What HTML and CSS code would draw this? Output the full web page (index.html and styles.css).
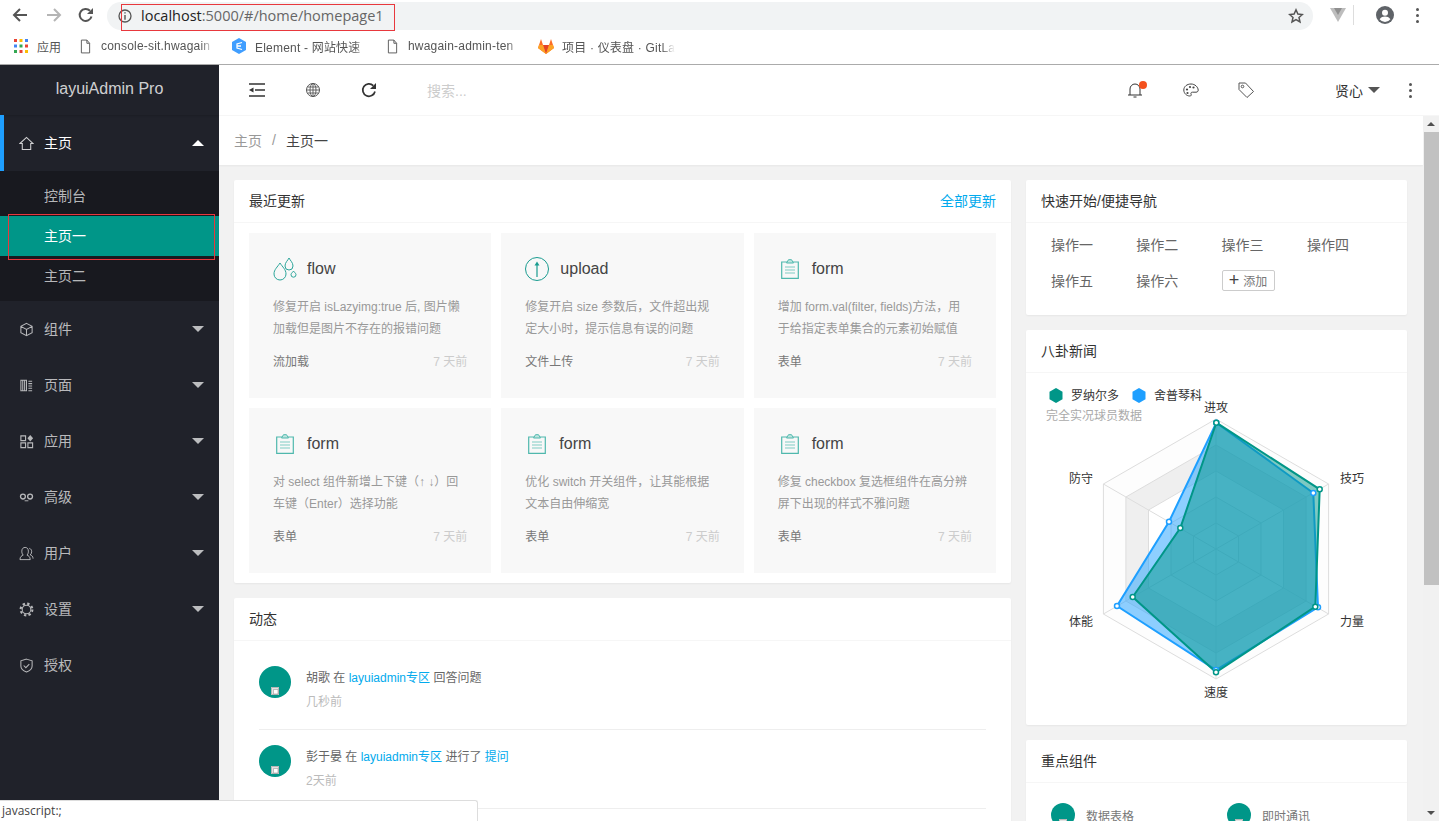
FILE: index.html
```html
<!DOCTYPE html>
<html lang="en">
<head>
  <meta charset="UTF-8" />
  <title>layuiAdmin Pro</title>
  <link rel="stylesheet" href="styles.css">
</head>
<body>

<svg class="defs" width="0" height="0">
  <symbol id="i-form" viewBox="0 0 18 20">
    <path d="M6 3H.7v16.300h16.600V3H12" fill="none" stroke="#4fb8ad" stroke-width="1.200"/>
    <path d="M5.500 4 7.500.7h3L12.500 4z" fill="#bfe5e0" stroke="#4fb8ad" stroke-width="1"/>
    <path d="M4 8h10M4 11h10M4 14h10" stroke="#7fccc3" stroke-width="1"/>
  </symbol>
  <symbol id="i-caret" viewBox="0 0 12 6"><path d="M0 0h12L6 6z" fill="currentColor"/></symbol>
  <symbol id="i-doc" viewBox="0 0 12 16"><path d="M1.500 1h6l3 3.500V15h-9zM7.500 1v3.500h3" fill="#fff" stroke="#555" stroke-width="1"/></symbol>
  <symbol id="i-broken" viewBox="0 0 8 8"><path d="M0 0h8v8H0z" fill="#e4e4e4"/><path d="M.5.5h7v7h-7z" fill="none" stroke="#aaa" stroke-width=".8"/><path d="M2.500 2.500H7V7H2.500z" fill="#fff" stroke="#999" stroke-width=".6"/></symbol>
</svg>

<div class="browser">
  <div class="toolbar">
    <svg class="nav-ico" viewBox="0 0 16 16"><path d="M15 8H2M8 2 2 8l6 6" fill="none" stroke="#555" stroke-width="2"/></svg>
    <svg class="nav-ico" viewBox="0 0 16 16"><path d="M1 8h13M8 2l6 6-6 6" fill="none" stroke="#b5b5b5" stroke-width="2"/></svg>
    <svg class="nav-ico" viewBox="0 0 16 16"><path d="M13.500 9.500A6 6 0 1 1 12 3.700" fill="none" stroke="#555" stroke-width="2"/><path d="M15 1v6H9z" fill="#555"/></svg>
    <div class="omnibox">
      <svg class="info-ico" viewBox="0 0 14 14"><circle cx="7" cy="7" r="6" fill="none" stroke="#555" stroke-width="1.300"/><path d="M6.300 3.200h1.400v1.400H6.300zM6.300 6h1.400v4.800H6.300z" fill="#555"/></svg>
      <span class="url"><b>localhost</b>:5000/#/home/homepage1</span>
      <svg class="star-ico" viewBox="0 0 16 16"><path d="m8 1.800 1.900 4.200 4.500.5-3.400 3 1 4.500L8 11.700 4 14l1-4.500-3.400-3 4.500-.5z" fill="none" stroke="#555" stroke-width="1.500"/></svg>
    </div>
    <svg class="vue-ico" viewBox="0 0 16 14"><path d="M0 0h16L8 14z" fill="#bdbdbd"/><path d="M4 0h8L8 7z" fill="#8f8f8f"/></svg>
    <span class="tool-sep"></span>
    <svg class="acct-ico" viewBox="0 0 18 18"><circle cx="9" cy="9" r="9" fill="#5f6368"/><circle cx="9" cy="6.800" r="3" fill="#fff"/><path d="M3.600 13.200c1.200-2 3.400-2.700 5.400-2.700s4.200.7 5.400 2.700A7 7 0 0 1 9 16a7 7 0 0 1-5.400-2.800z" fill="#fff"/></svg>
    <span class="kebab kebab-browser"><i></i><i></i><i></i></span>
  </div>
  <div class="bookmarks">
    <svg class="apps-ico" viewBox="0 0 14 14">
      <path d="M0 0h3v3H0z" fill="#ea4335"/><path d="M5.500 0h3v3h-3z" fill="#fbbc05"/><path d="M11 0h3v3h-3z" fill="#4285f4"/>
      <path d="M0 5.500h3v3H0z" fill="#4285f4"/><path d="M5.500 5.500h3v3h-3z" fill="#34a853"/><path d="M11 5.500h3v3h-3z" fill="#ea4335"/>
      <path d="M0 11h3v3H0z" fill="#34a853"/><path d="M5.500 11h3v3h-3z" fill="#ea4335"/><path d="M11 11h3v3h-3z" fill="#fbbc05"/>
    </svg>
    <span class="bm-apps">应用</span>
    <svg class="bm-ico bm-doc"><use href="#i-doc"/></svg>
    <span class="bm-text">console-sit.hwagain</span>
    <svg class="bm-ico bm-hex" viewBox="0 0 14 16"><path d="M7 0l7 4v8l-7 4-7-4V4z" fill="#409eff"/><path d="M10 4.500 5 6v4l5 1.500M5 8h4" fill="none" stroke="#fff" stroke-width="1.300"/></svg>
    <span class="bm-text">Element - 网站快速</span>
    <svg class="bm-ico bm-doc"><use href="#i-doc"/></svg>
    <span class="bm-text">hwagain-admin-ten</span>
    <svg class="bm-ico bm-fox" viewBox="0 0 16 15"><path d="M8 15 0 9l1-3 2-6 2 6h6l2-6 2 6 1 3z" fill="#fc6d26"/><path d="M8 15 5 6h6z" fill="#e24329"/><path d="M8 15 0 9l1-3h4zM8 15l8-6-1-3h-4z" fill="#fca326"/></svg>
    <span class="bm-text">项目 · 仪表盘 · GitLa</span>
  </div>
</div>

<div class="app">
  <aside class="side">
    <div class="logo">layuiAdmin Pro</div>
    <ul class="menu">
      <li class="menu-item is-open">
        <svg class="menu-ico" viewBox="0 0 16 16"><path d="M1 8 8 1.500 15 8h-2.500v6.500h-9V8z" fill="none" stroke="currentColor" stroke-width="1.100"/></svg>
        <span>主页</span>
        <svg class="caret caret-up"><use href="#i-caret"/></svg>
      </li>
      <li class="submenu">
        <a>控制台</a>
        <a class="is-active">主页一</a>
        <a>主页二</a>
      </li>
      <li class="menu-item">
        <svg class="menu-ico" viewBox="0 0 16 16"><path d="m8 1.500 6 3.200v6.600l-6 3.200-6-3.200V4.700zM2 4.700l6 3.300 6-3.300M8 8v6.500" fill="none" stroke="currentColor" stroke-width="1.100"/></svg>
        <span>组件</span>
        <svg class="caret"><use href="#i-caret"/></svg>
      </li>
      <li class="menu-item">
        <svg class="menu-ico" viewBox="0 0 16 16"><path d="M2 2.500h6v11H2zM4 2.500v11M6 2.500v11M10 3.500h4M10 6h4M10 8.500h4M10 11h4M10 13.500h4" fill="none" stroke="currentColor" stroke-width="1.100"/></svg>
        <span>页面</span>
        <svg class="caret"><use href="#i-caret"/></svg>
      </li>
      <li class="menu-item">
        <svg class="menu-ico" viewBox="0 0 16 16"><path d="M2 2h5v5H2zM2 9.500h5v5H2zM9.500 9.500h5v5h-5z" fill="none" stroke="currentColor" stroke-width="1.200"/><path d="m12 1 3 3.500L12 8 9 4.500z" fill="currentColor"/></svg>
        <span>应用</span>
        <svg class="caret"><use href="#i-caret"/></svg>
      </li>
      <li class="menu-item">
        <svg class="menu-ico" viewBox="0 0 16 16"><circle cx="4.200" cy="7" r="2.600" fill="none" stroke="currentColor" stroke-width="1.400"/><circle cx="11.800" cy="7" r="2.600" fill="none" stroke="currentColor" stroke-width="1.400"/><path d="M6 11.500h4" stroke="currentColor" stroke-width="1"/></svg>
        <span>高级</span>
        <svg class="caret"><use href="#i-caret"/></svg>
      </li>
      <li class="menu-item">
        <svg class="menu-ico" viewBox="0 0 16 16"><path d="M1 14.500c0-3 2-4.300 3.500-4.800C3.200 8.500 3 6.800 3 5.500 3 3 4.500 1.500 6.500 1.500S10 3 10 5.500c0 1.300-.2 3-1.500 4.200 1.500.5 3.500 1.800 3.500 4.800zM11 2.500c1.800.5 2.500 2 2.500 3.500S13 8.500 12 9.500c1.500.5 3 1.500 3 4" fill="none" stroke="currentColor" stroke-width="1"/></svg>
        <span>用户</span>
        <svg class="caret"><use href="#i-caret"/></svg>
      </li>
      <li class="menu-item">
        <svg class="menu-ico" viewBox="0 0 16 16"><circle cx="8" cy="8" r="4.600" fill="none" stroke="currentColor" stroke-width="1.100"/><circle cx="8" cy="8" r="6.300" fill="none" stroke="currentColor" stroke-width="2.200" stroke-dasharray="2.500 2.450"/></svg>
        <span>设置</span>
        <svg class="caret"><use href="#i-caret"/></svg>
      </li>
      <li class="menu-item">
        <svg class="menu-ico" viewBox="0 0 16 16"><path d="M8 1.200 14 3v5.500c0 3-3 5.300-6 6.500-3-1.200-6-3.500-6-6.500V3z" fill="none" stroke="currentColor" stroke-width="1.100"/><path d="m5 8 2.300 2.300L11 6.500" fill="none" stroke="currentColor" stroke-width="1.100"/></svg>
        <span>授权</span>
      </li>
    </ul>
  </aside>

  <div class="work">
    <header class="topbar">
      <span class="top-cell">
        <svg class="top-ico" viewBox="0 0 16 14"><path d="M0 1h16M6 7h10M0 13h16" stroke="#333" stroke-width="1.300"/><path d="M4.500 4.500v5L0 7z" fill="#333"/></svg>
      </span>
      <span class="top-cell">
        <svg class="top-ico" viewBox="0 0 16 16"><circle cx="8" cy="8" r="6.500" fill="none" stroke="#555" stroke-width="1"/><ellipse cx="8" cy="8" rx="3" ry="6.500" fill="none" stroke="#555" stroke-width=".9"/><path d="M1.500 8h13M2.500 5h11M2.500 11h11M8 1.500v13" stroke="#555" stroke-width=".9"/></svg>
      </span>
      <span class="top-cell">
        <svg class="top-ico" viewBox="0 0 16 16"><path d="M14 9.500A6.200 6.200 0 1 1 12.300 3.600" fill="none" stroke="#333" stroke-width="1.700"/><path d="M15 1v6H9z" fill="#333"/></svg>
      </span>
      <span class="search">搜索...</span>
      <span class="top-right">
        <span class="top-cell top-cell-r">
          <svg class="top-ico" viewBox="0 0 16 16"><path d="M1 13h14M3 13V7a5 5 0 0 1 10 0v6M6.500 15h3" fill="none" stroke="#333" stroke-width="1"/></svg>
          <i class="bell-dot"></i>
        </span>
        <span class="top-cell top-cell-r">
          <svg class="top-ico" viewBox="0 0 16 16"><path d="M8 2C4 2 .8 4.500.8 8s3 6 6 6c1.500 0 1.700-1 1.200-2-.4-1 .2-1.800 1.500-1.800H13c1.500 0 2.300-1 2.200-2.200C15 5 12 2 8 2z" fill="none" stroke="#444" stroke-width="1"/><circle cx="4" cy="7.500" r="1.100" fill="#444"/><circle cx="7" cy="5" r="1.100" fill="#444"/><circle cx="10.500" cy="5.500" r="1.100" fill="#444"/><circle cx="4.500" cy="11" r="1.100" fill="#444"/></svg>
        </span>
        <span class="top-cell top-cell-r">
          <svg class="top-ico" viewBox="0 0 16 16"><path d="M1 1h6.500L15.500 9.500 9 15.500 1 7.500z" fill="none" stroke="#555" stroke-width="1"/><circle cx="4.500" cy="4.500" r="1.300" fill="none" stroke="#555"/></svg>
        </span>
        <span class="user">贤心<svg class="user-caret"><use href="#i-caret"/></svg></span>
        <span class="kebab kebab-top"><i></i><i></i><i></i></span>
      </span>
    </header>

    <div class="viewport">
      <div class="page">
        <div class="crumbs"><span>主页</span><em>/</em><b>主页一</b></div>
        <div class="content">
          <div class="col-main">
            <section class="card">
              <h3 class="card-head">最近更新<a>全部更新</a></h3>
              <div class="updates">
                <div class="update">
                  <div class="update-title">
                    <svg class="update-ico flow-ico" viewBox="0 0 26 24"><path d="M7 6c2.500 4 6 6.500 6 11a6 6 0 0 1-12 0C1 12.500 4.500 10 7 6zM16 1c1.200 2.500 4 4.500 4 8a4 4 0 0 1-8 0c0-3.500 2.800-5.500 4-8zM20.500 14c.6 1.300 2.500 2.200 2.500 3.700a2.500 2.500 0 0 1-5 0c0-1.500 1.900-2.400 2.500-3.700z" fill="none" stroke="#2ba59a" stroke-width="1"/></svg>
                    flow
                  </div>
                  <p>修复开启 isLazyimg:true 后, 图片懒加载但是图片不存在的报错问题</p>
                  <div class="update-foot"><span>流加载</span><time>7 天前</time></div>
                </div>
                <div class="update">
                  <div class="update-title">
                    <svg class="update-ico" viewBox="0 0 26 24"><circle cx="12" cy="12" r="11.500" fill="none" stroke="#1a9c90" stroke-width="1"/><path d="M12 20V8" stroke="#1a9c90" stroke-width="1.200"/><path d="m12 4.500 2.500 4h-5z" fill="#1a9c90"/></svg>
                    upload
                  </div>
                  <p>修复开启 size 参数后，文件超出规定大小时，提示信息有误的问题</p>
                  <div class="update-foot"><span>文件上传</span><time>7 天前</time></div>
                </div>
                <div class="update">
                  <div class="update-title"><svg class="form-ico"><use href="#i-form"/></svg>form</div>
                  <p>增加 form.val(filter, fields)方法，用于给指定表单集合的元素初始赋值</p>
                  <div class="update-foot"><span>表单</span><time>7 天前</time></div>
                </div>
                <div class="update">
                  <div class="update-title"><svg class="form-ico"><use href="#i-form"/></svg>form</div>
                  <p>对 select 组件新增上下键（↑ ↓）回车键（Enter）选择功能</p>
                  <div class="update-foot"><span>表单</span><time>7 天前</time></div>
                </div>
                <div class="update">
                  <div class="update-title"><svg class="form-ico"><use href="#i-form"/></svg>form</div>
                  <p>优化 switch 开关组件，让其能根据文本自由伸缩宽</p>
                  <div class="update-foot"><span>表单</span><time>7 天前</time></div>
                </div>
                <div class="update">
                  <div class="update-title"><svg class="form-ico"><use href="#i-form"/></svg>form</div>
                  <p>修复 checkbox 复选框组件在高分辨屏下出现的样式不雅问题</p>
                  <div class="update-foot"><span>表单</span><time>7 天前</time></div>
                </div>
              </div>
            </section>

            <section class="card">
              <h3 class="card-head">动态</h3>
              <div class="feed">
                <div class="feed-item">
                  <span class="avatar"><svg class="broken"><use href="#i-broken"/></svg></span>
                  <div class="feed-body">
                    <div class="feed-text">胡歌 在 <a>layuiadmin专区</a> 回答问题</div>
                    <div class="feed-time">几秒前</div>
                  </div>
                </div>
                <div class="feed-item">
                  <span class="avatar"><svg class="broken"><use href="#i-broken"/></svg></span>
                  <div class="feed-body">
                    <div class="feed-text">彭于晏 在 <a>layuiadmin专区</a> 进行了 <a>提问</a></div>
                    <div class="feed-time">2天前</div>
                  </div>
                </div>
              </div>
            </section>
          </div>

          <div class="col-side">
            <section class="card">
              <h3 class="card-head">快速开始/便捷导航</h3>
              <div class="quick">
                <a>操作一</a><a>操作二</a><a>操作三</a><a>操作四</a>
                <a>操作五</a><a>操作六</a>
                <a class="add-btn"><span class="plus">+</span>添加</a>
              </div>
            </section>

            <section class="card">
              <h3 class="card-head">八卦新闻</h3>
              <svg class="radar" viewBox="0 0 381 352">
                <polygon points="190,46 302.600,111 302.600,241 190,306 77.400,241 77.400,111" fill="#fdfdfd" stroke="#ddd"/>
                <polygon points="190,72 280.100,124 280.100,228 190,280 99.900,228 99.900,124" fill="#efefef" stroke="#ddd"/>
                <polygon points="190,98 257.500,137 257.500,215 190,254 122.500,215 122.500,137" fill="#fff" stroke="#ddd"/>
                <polygon points="190,124 235,150 235,202 190,228 145,202 145,150" fill="#f9f9f9" stroke="#ddd"/>
                <polygon points="190,150 212.500,163 212.500,189 190,202 167.500,189 167.500,163" fill="#fdfdfd" stroke="#ddd"/>
                <path d="M190 176V46M190 176 302.600 111M190 176 302.600 241M190 176V306M190 176 77.400 241M190 176 77.400 111" stroke="#ddd"/>

                <polygon class="s-blue" points="190.300,49.700 287.300,120 292,234.300 190,297 91,233 143,148.700"/>
                <polygon class="s-green" points="190.300,49.700 293.700,116.300 289.300,233.700 190,299.300 106.700,224 154.300,155"/>
                <g class="dots-blue">
                  <circle cx="190.300" cy="49.700" r="2.500"/><circle cx="287.300" cy="120" r="2.500"/><circle cx="292" cy="234.300" r="2.500"/><circle cx="190" cy="297" r="2.500"/><circle cx="91" cy="233" r="2.500"/><circle cx="143" cy="148.700" r="2.500"/>
                </g>
                <g class="dots-green">
                  <circle cx="190.300" cy="49.700" r="2.500"/><circle cx="293.700" cy="116.300" r="2.500"/><circle cx="289.300" cy="233.700" r="2.500"/><circle cx="190" cy="299.300" r="2.500"/><circle cx="106.700" cy="224" r="2.500"/><circle cx="154.300" cy="155" r="2.500"/>
                </g>

                <polygon points="30,15 36.500,18.700 36.500,26.300 30,30 23.500,26.300 23.500,18.700" fill="#009688"/>
                <polygon points="113,15 119.500,18.700 119.500,26.300 113,30 106.500,26.300 106.500,18.700" fill="#1e9fff"/>
                <text class="r-label" x="45" y="26.500">罗纳尔多</text>
                <text class="r-label" x="128" y="26.500">舍普琴科</text>
                <text class="r-sub" x="20" y="46.500">完全实况球员数据</text>
                <text class="r-label" x="190" y="38.500" text-anchor="middle">进攻</text>
                <text class="r-label" x="314" y="109.500">技巧</text>
                <text class="r-label" x="314" y="252.500">力量</text>
                <text class="r-label" x="190" y="323.500" text-anchor="middle">速度</text>
                <text class="r-label" x="67" y="252.500" text-anchor="end">体能</text>
                <text class="r-label" x="67" y="109.500" text-anchor="end">防守</text>
              </svg>
            </section>

            <section class="card">
              <h3 class="card-head">重点组件</h3>
              <div class="parts">
                <div class="part"><span class="avatar avatar-sm"><svg class="broken"><use href="#i-broken"/></svg></span>数据表格</div>
                <div class="part"><span class="avatar avatar-sm"><svg class="broken"><use href="#i-broken"/></svg></span>即时通讯</div>
              </div>
            </section>
          </div>
        </div>
      </div>
      <div class="scroll">
        <svg class="scroll-arrow" viewBox="0 0 8 4"><path d="M0 4h8L4 0z" fill="#505050"/></svg>
        <div class="scroll-track"><div class="scroll-thumb"></div></div>
        <svg class="scroll-arrow" viewBox="0 0 8 4"><path d="M0 0h8L4 4z" fill="#505050"/></svg>
      </div>
    </div>
  </div>
</div>

<div class="mark mark-url"></div>
<div class="mark mark-menu"></div>
<div class="status">javascript:;</div>

</body>
</html>
```

FILE: styles.css
```css
* {
  box-sizing: border-box;
}
html, body {
  height: 100%;
}
body {
  margin: 0;
  height: 821px;
  overflow: hidden;
  position: relative;
  font-family: "Liberation Sans", "Noto Sans CJK SC", sans-serif;
  font-size: 14px;
  color: #666;
  background: #fff;
}
ul, h3, p {
  margin: 0;
  padding: 0;
}
li {
  list-style: none;
}
.defs {
  position: absolute;
}

/* browser chrome */
.browser {
  height: 65px;
  border-bottom: 1px solid #ababab;
  background: #fff;
}
.toolbar {
  height: 30px;
  display: flex;
  align-items: center;
  padding-left: 12px;
}
.nav-ico {
  width: 16px;
  height: 16px;
  margin-right: 18px;
  flex: none;
}
.nav-ico:nth-child(2) {
  margin-right: 16px;
}
.nav-ico:nth-child(3) {
  margin-right: 13px;
}
.omnibox {
  width: 1206px;
  height: 28px;
  margin-top: 1px;
  border-radius: 14px;
  background: #f1f3f4;
  display: flex;
  align-items: center;
  padding: 0 9px 0 11px;
  flex: none;
}
.info-ico {
  width: 14px;
  height: 14px;
  margin-right: 9px;
}
.url {
  font-family: "Open Sans", sans-serif;
  font-size: 14.500px;
  color: #666;
  white-space: nowrap;
}
.url b {
  font-weight: 400;
  color: #222;
}
.star-ico {
  width: 16px;
  height: 16px;
  margin-left: auto;
}
.vue-ico {
  width: 16px;
  height: 14px;
  margin-left: 17px;
  flex: none;
}
.tool-sep {
  width: 1px;
  height: 20px;
  margin-left: 7px;
  background: #ddd;
}
.acct-ico {
  width: 18px;
  height: 18px;
  margin-left: 22px;
  flex: none;
}
.kebab {
  display: flex;
  flex-direction: column;
  gap: 3px;
}
.kebab i {
  width: 3px;
  height: 3px;
  border-radius: 50%;
  background: #555;
}
.kebab-browser {
  margin-left: 22px;
}
.bookmarks {
  height: 34px;
  display: flex;
  align-items: center;
  padding-left: 14px;
  padding-bottom: 2px;
  font-size: 12px;
  color: #555;
}
.apps-ico {
  width: 14px;
  height: 14px;
  flex: none;
}
.bm-apps {
  margin-left: 9px;
  width: 24px;
  flex: none;
}
.bm-ico {
  flex: none;
}
.bm-doc {
  width: 11px;
  height: 15px;
  margin-left: 19px;
  margin-right: 10px;
}
.bm-hex {
  width: 14px;
  height: 16px;
  margin-left: 18px;
  margin-right: 9px;
}
.bm-fox {
  width: 16px;
  height: 15px;
  margin-left: 17px;
  margin-right: 8px;
}
.bm-text {
  width: 113px;
  flex: none;
  overflow: hidden;
  white-space: nowrap;
  letter-spacing: .2px;
  -webkit-mask-image: linear-gradient(to right, #000 88%, transparent);
  mask-image: linear-gradient(to right, #000 88%, transparent);
}

/* app shell */
.app {
  height: 756px;
  display: flex;
}
.side {
  width: 219px;
  flex: none;
  background: #20222a;
  color: rgba(255, 255, 255, .7);
}
.logo {
  height: 50px;
  line-height: 48px;
  text-align: center;
  font-size: 16px;
  color: rgba(255, 255, 255, .8);
  background: #20222a;
  box-shadow: 0 1px 2px rgba(0, 0, 0, .15);
}
.menu-item {
  height: 56px;
  display: flex;
  align-items: center;
  padding-left: 19px;
  padding-right: 15px;
  position: relative;
}
.menu-item span {
  margin-top: -2px;
}
.menu-ico {
  width: 15px;
  height: 15px;
  margin-right: 10px;
  color: rgba(255, 255, 255, .68);
  flex: none;
}
.caret {
  width: 12px;
  height: 6px;
  margin-left: auto;
  color: rgba(255, 255, 255, .7);
}
.caret-up {
  transform: rotate(180deg);
  color: #fff;
}
.is-open {
  color: #fff;
  border-left: 4px solid #1e9fff;
  padding-left: 15px;
}
.is-open .menu-ico {
  color: rgba(255, 255, 255, .8);
}
.submenu {
  padding: 5px 0;
  background: #18191f;
}
.submenu a {
  display: block;
  height: 40px;
  line-height: 40px;
  padding-left: 44px;
}
.submenu .is-active {
  background: #009688;
  color: #fff;
}

/* top bar */
.work {
  flex: 1;
  min-width: 0;
  display: flex;
  flex-direction: column;
}
.topbar {
  height: 51px;
  flex: none;
  display: flex;
  align-items: center;
  padding-left: 10px;
  border-bottom: 1px solid #f6f6f6;
  background: #fff;
}
.top-cell {
  width: 56px;
  display: flex;
  justify-content: center;
  position: relative;
}
.top-ico {
  width: 16px;
  height: 16px;
}
.search {
  margin-left: 30px;
  color: #ccc;
}
.top-right {
  margin-left: auto;
  display: flex;
  align-items: center;
}
.top-cell-r {
  width: 55.500px;
}
.bell-dot {
  position: absolute;
  left: 31px;
  top: -1px;
  width: 8px;
  height: 8px;
  border-radius: 50%;
  background: #f4511e;
}
.user {
  margin-left: 61px;
  display: flex;
  align-items: center;
  color: #333;
}
.user-caret {
  width: 12px;
  height: 6px;
  margin-left: 5px;
  color: #555;
}
.kebab-top {
  margin-left: 29px;
  margin-right: 27px;
}

/* page */
.viewport {
  flex: 1;
  min-height: 0;
  display: flex;
}
.page {
  flex: 1;
  min-width: 0;
  overflow: hidden;
  background: #f2f2f2;
}
.crumbs {
  height: 49px;
  display: flex;
  align-items: center;
  padding-left: 15px;
  padding-bottom: 2px;
  background: #fff;
  color: #999;
  box-shadow: 0 1px 2px rgba(0, 0, 0, .05);
  margin-bottom: 15px;
}
.crumbs em {
  font-style: normal;
  margin: 0 10px;
}
.crumbs b {
  font-weight: 400;
  color: #444;
}
.content {
  display: grid;
  grid-template-columns: 777px 381px;
  gap: 15px;
  padding: 0 15px;
}
.col-main, .col-side {
  display: flex;
  flex-direction: column;
  gap: 15px;
}
.card {
  background: #fff;
  border-radius: 2px;
  box-shadow: 0 1px 2px rgba(0, 0, 0, .05);
}
.card-head {
  height: 43px;
  line-height: 42px;
  padding: 0 15px;
  border-bottom: 1px solid #f6f6f6;
  font-size: 14px;
  font-weight: 400;
  color: #333;
  display: flex;
  justify-content: space-between;
}
.card-head a {
  color: #01aaed;
}

/* updates */
.updates {
  display: grid;
  grid-template-columns: repeat(3, 1fr);
  gap: 10px;
  padding: 10px 15px;
}
.update {
  height: 165px;
  padding: 24px 24px 0;
  background: #f8f8f8;
}
.update-title {
  height: 24px;
  display: flex;
  align-items: center;
  font-size: 16px;
  color: #444;
}
.update-ico {
  width: 26px;
  height: 24px;
  margin-right: 9px;
  flex: none;
}
.flow-ico {
  margin-right: 8px;
}
.form-ico {
  width: 18px;
  height: 20px;
  margin: 0 13px 0 3px;
  flex: none;
}
.update p {
  margin-top: 15px;
  height: 44px;
  font-size: 12px;
  line-height: 22px;
  color: #999;
}
.update-foot {
  margin-top: 11px;
  display: flex;
  justify-content: space-between;
  font-size: 12px;
  line-height: 22px;
  color: #777;
}
.update-foot time {
  color: #ccc;
}

/* feed */
.feed {
  padding: 25px 25px 60px;
}
.feed-item {
  display: flex;
  gap: 15px;
  height: 64px;
  border-bottom: 1px solid #eee;
  font-size: 12px;
}
.feed-item + .feed-item {
  height: 79px;
  padding-top: 15px;
}
.feed-body {
  padding-top: 1px;
}
.avatar {
  position: relative;
  display: block;
  width: 32px;
  height: 32px;
  flex: none;
  overflow: hidden;
  border-radius: 50%;
  background: #009688;
}
.broken {
  position: absolute;
  left: 12px;
  top: 21px;
  width: 8px;
  height: 8px;
}
.feed-text {
  line-height: 22px;
  color: #666;
}
.feed-text a {
  color: #01aaed;
}
.feed-time {
  margin-top: 2px;
  line-height: 22px;
  color: #bbb;
}

/* side cards */
.quick {
  display: grid;
  grid-template-columns: repeat(4, 85.300px);
  grid-auto-rows: 36px;
  align-items: center;
  padding: 3px 25px 17px;
  color: #666;
}
.add-btn {
  width: 53px;
  height: 21px;
  border: 1px solid #ccc;
  border-radius: 2px;
  display: flex;
  align-items: center;
  justify-content: center;
  font-size: 12px;
  color: #777;
}
.plus {
  font-size: 18px;
  line-height: 18px;
  margin-right: 4px;
  color: #444;
}
.radar {
  display: block;
  width: 381px;
  height: 352px;
}
.s-blue {
  fill: rgba(30, 159, 255, .5);
  stroke: #1e9fff;
  stroke-width: 2;
}
.s-green {
  fill: rgba(0, 150, 136, .5);
  stroke: #009688;
  stroke-width: 2;
}
.dots-blue circle {
  fill: #fff;
  stroke: #1e9fff;
  stroke-width: 1.500;
}
.dots-green circle {
  fill: #fff;
  stroke: #009688;
  stroke-width: 1.500;
}
.r-label {
  font-size: 12px;
  fill: #333;
}
.r-sub {
  font-size: 12px;
  fill: #aaa;
}
.parts {
  display: grid;
  grid-template-columns: 176px 176px;
  padding: 20px 25px;
  font-size: 12px;
  color: #777;
}
.part {
  display: flex;
  align-items: center;
  gap: 11px;
}
.avatar-sm {
  width: 24px;
  height: 24px;
}
.avatar-sm .broken {
  left: 8px;
  top: 16px;
}

/* scrollbar */
.scroll {
  width: 16px;
  flex: none;
  display: flex;
  flex-direction: column;
  background: #f1f1f1;
}
.scroll-arrow {
  width: 8px;
  height: 4px;
  margin: 6px 4px;
  flex: none;
}
.scroll-track {
  flex: 1;
}
.scroll-thumb {
  height: 453px;
  margin-left: 1px;
  background: #c1c1c1;
}

/* things lying over the page */
.mark {
  position: absolute;
  border: 1px solid #e8383d;
}
.mark-url {
  left: 121px;
  top: 4px;
  width: 274px;
  height: 27px;
}
.mark-menu {
  left: 8px;
  top: 214px;
  width: 207px;
  height: 46px;
}
.status {
  position: absolute;
  left: 0;
  bottom: 0;
  width: 478px;
  height: 21px;
  padding-left: 2px;
  line-height: 20px;
  font-family: "Open Sans", sans-serif;
  font-size: 12px;
  color: #444;
  background: #fff;
  border-top: 1px solid #ddd;
  border-right: 1px solid #ddd;
  border-top-right-radius: 3px;
}
```
